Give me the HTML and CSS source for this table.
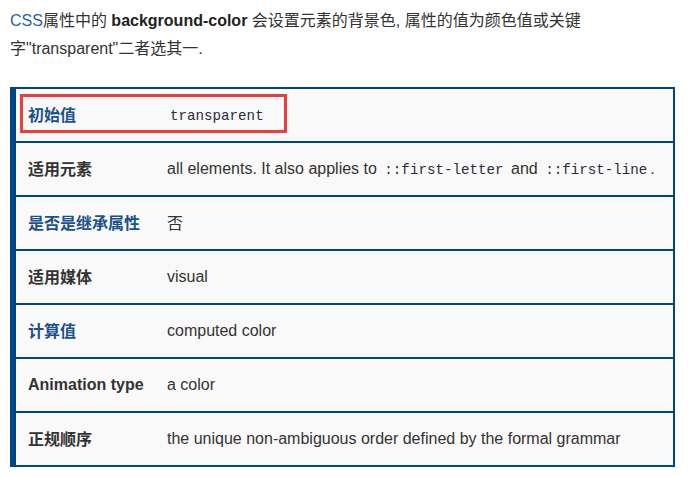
FILE: index.html
```html
<!DOCTYPE html>
<html lang="zh-CN">
<head>
<meta charset="utf-8">
<title>background-color</title>
<link rel="stylesheet" href="styles.css">
</head>
<body>
<div class="page">
  <p class="intro"><a class="link" href="#">CSS</a>属性中的 <strong>background-color</strong> 会设置元素的背景色, 属性的值为颜色值或关键字"transparent"二者选其一.</p>
  <div class="props">
    <div class="row">
      <div class="label link-label cjk">初始值</div>
      <div class="value"><code>transparent</code></div>
    </div>
    <div class="row">
      <div class="label cjk">适用元素</div>
      <div class="value">all elements. It also applies to <code>::first-letter</code> and <code>::first-line</code>.</div>
    </div>
    <div class="row">
      <div class="label link-label cjk">是否是继承属性</div>
      <div class="value cjk">否</div>
    </div>
    <div class="row">
      <div class="label cjk">适用媒体</div>
      <div class="value">visual</div>
    </div>
    <div class="row">
      <div class="label link-label cjk">计算值</div>
      <div class="value">computed color</div>
    </div>
    <div class="row">
      <div class="label">Animation type</div>
      <div class="value">a color</div>
    </div>
    <div class="row">
      <div class="label cjk">正规顺序</div>
      <div class="value">the unique non-ambiguous order defined by the formal grammar</div>
    </div>
    <div class="highlight"></div>
  </div>
</div>
</body>
</html>
```
FILE: styles.css
```css
html, body {
  margin: 0;
  padding: 0;
  background: #ffffff;
}
body {
  font-family: "Liberation Sans", "Noto Sans CJK SC", sans-serif;
  font-size: 16px;
  color: #333333;
}
.page {
  padding: 7px 16px 0 10px;
}
.intro {
  margin: 0 0 24px 0;
  line-height: 28px;
}
.intro strong {
  font-weight: bold;
  color: #222;
}
.link {
  color: #2a63a6;
  text-decoration: none;
}
.props {
  position: relative;
  border: 2px solid #004586;
  border-left-width: 6px;
  background: #f9f9f9;
}
.row {
  display: grid;
  grid-template-columns: 139px 1fr;
  align-items: center;
  height: 52px;
  border-top: 2px solid #004586;
}
.row:first-child {
  border-top: none;
}
.label {
  padding-left: 12px;
  font-weight: bold;
  color: #333333;
}
.link-label {
  color: #19508d;
}
.value {
  padding-left: 12px;
  color: #333333;
  white-space: nowrap;
}
.cjk {
  padding-bottom: 3px;
}
code {
  font-family: "Liberation Mono", "DejaVu Sans Mono", monospace;
  font-size: 14.2px;
  color: #2b2b3a;
  padding: 0 3px;
}
.highlight {
  position: absolute;
  left: 4px;
  top: 5px;
  width: 267px;
  height: 39px;
  box-sizing: border-box;
  border: 3px solid #f23b3b;
  pointer-events: none;
}
```
